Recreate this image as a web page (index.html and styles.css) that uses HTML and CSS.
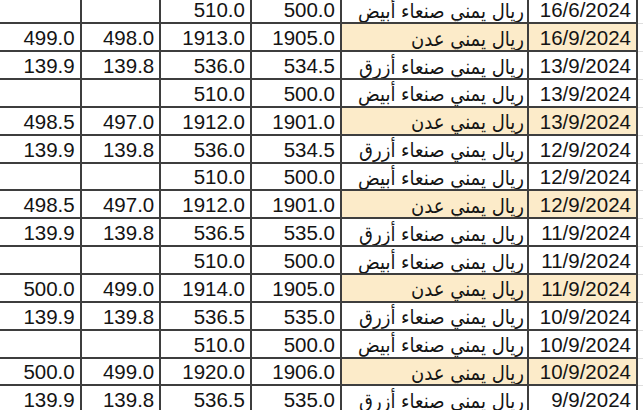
FILE: index.html
```html
<!DOCTYPE html>
<html lang="ar">
<head>
<meta charset="utf-8">
<title>أسعار الصرف</title>
<link rel="stylesheet" href="styles.css">
</head>
<body>
<div class="sheet">
  <div class="c n"></div><div class="c n"></div><div class="c n">510.0</div><div class="c n">500.0</div><div class="c t">ريال يمني صنعاء أبيض</div><div class="c d">16/6/2024</div><div class="c g"></div>
  <div class="c n">499.0</div><div class="c n">498.0</div><div class="c n">1913.0</div><div class="c n">1905.0</div><div class="c t hl">ريال يمني عدن</div><div class="c d hl">16/9/2024</div><div class="c g"></div>
  <div class="c n">139.9</div><div class="c n">139.8</div><div class="c n">536.0</div><div class="c n">534.5</div><div class="c t">ريال يمني صنعاء أزرق</div><div class="c d">13/9/2024</div><div class="c g"></div>
  <div class="c n"></div><div class="c n"></div><div class="c n">510.0</div><div class="c n">500.0</div><div class="c t">ريال يمني صنعاء أبيض</div><div class="c d">13/9/2024</div><div class="c g"></div>
  <div class="c n">498.5</div><div class="c n">497.0</div><div class="c n">1912.0</div><div class="c n">1901.0</div><div class="c t hl">ريال يمني عدن</div><div class="c d hl">13/9/2024</div><div class="c g"></div>
  <div class="c n">139.9</div><div class="c n">139.8</div><div class="c n">536.0</div><div class="c n">534.5</div><div class="c t">ريال يمني صنعاء أزرق</div><div class="c d">12/9/2024</div><div class="c g"></div>
  <div class="c n"></div><div class="c n"></div><div class="c n">510.0</div><div class="c n">500.0</div><div class="c t">ريال يمني صنعاء أبيض</div><div class="c d">12/9/2024</div><div class="c g"></div>
  <div class="c n">498.5</div><div class="c n">497.0</div><div class="c n">1912.0</div><div class="c n">1901.0</div><div class="c t hl">ريال يمني عدن</div><div class="c d hl">12/9/2024</div><div class="c g"></div>
  <div class="c n">139.9</div><div class="c n">139.8</div><div class="c n">536.5</div><div class="c n">535.0</div><div class="c t">ريال يمني صنعاء أزرق</div><div class="c d">11/9/2024</div><div class="c g"></div>
  <div class="c n"></div><div class="c n"></div><div class="c n">510.0</div><div class="c n">500.0</div><div class="c t">ريال يمني صنعاء أبيض</div><div class="c d">11/9/2024</div><div class="c g"></div>
  <div class="c n">500.0</div><div class="c n">499.0</div><div class="c n">1914.0</div><div class="c n">1905.0</div><div class="c t hl">ريال يمني عدن</div><div class="c d hl">11/9/2024</div><div class="c g"></div>
  <div class="c n">139.9</div><div class="c n">139.8</div><div class="c n">536.5</div><div class="c n">535.0</div><div class="c t">ريال يمني صنعاء أزرق</div><div class="c d">10/9/2024</div><div class="c g"></div>
  <div class="c n"></div><div class="c n"></div><div class="c n">510.0</div><div class="c n">500.0</div><div class="c t">ريال يمني صنعاء أبيض</div><div class="c d">10/9/2024</div><div class="c g"></div>
  <div class="c n">500.0</div><div class="c n">499.0</div><div class="c n">1920.0</div><div class="c n">1906.0</div><div class="c t hl">ريال يمني عدن</div><div class="c d hl">10/9/2024</div><div class="c g"></div>
  <div class="c n">139.9</div><div class="c n">139.8</div><div class="c n">536.5</div><div class="c n">535.0</div><div class="c t">ريال يمني صنعاء أزرق</div><div class="c d">9/9/2024</div><div class="c g"></div>
</div>
</body>
</html>
```
FILE: styles.css
```css
html, body {
  margin: 0;
  padding: 0;
  background: #ffffff;
  overflow: hidden;
}

.sheet {
  display: grid;
  grid-template-columns: 81.7px 79.6px 90.7px 90px 187px 109px 6px;
  grid-auto-rows: 27.86px;
  margin-top: -3.56px;
  font-family: "Liberation Sans", "DejaVu Sans", sans-serif;
  font-size: 20.5px;
  color: #141414;
}

.c {
  box-sizing: border-box;
  border-right: 2px solid #3e3e3e;
  border-bottom: 2px solid #3e3e3e;
  display: flex;
  align-items: flex-end;
  justify-content: flex-end;
  padding: 0 5px 1.5px 0;
  line-height: 1;
  white-space: nowrap;
  overflow: hidden;
}

.t {
  direction: rtl;
  justify-content: flex-start;
  padding-right: 3px;
  font-family: "DejaVu Sans Condensed", "DejaVu Sans", sans-serif;
  font-size: 20px;
}

.d {
  padding-right: 5px;
}

.hl {
  background: #fcebc9;
}

.g {
  border-right: 1px solid #d4d4d4;
  border-bottom: 1px solid #dedede;
  padding: 0;
}
```
